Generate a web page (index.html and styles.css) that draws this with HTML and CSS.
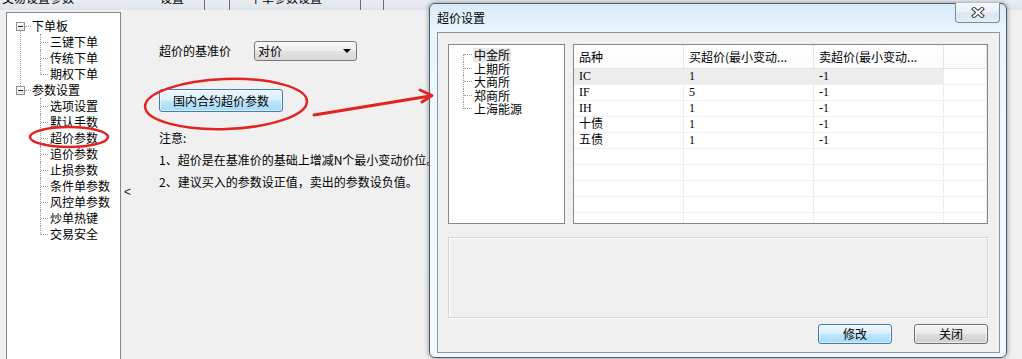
FILE: index.html
```html
<!DOCTYPE html>
<html lang="zh-CN">
<head>
<meta charset="utf-8">
<title>超价参数</title>
<link rel="stylesheet" href="styles.css">
</head>
<body>
<div class="app">
  <div class="tabstrip">
    <span class="tab tab-a">交易设置参数</span>
    <span class="tab tab-b">设置</span>
    <span class="tab-sep sep-a"></span>
    <span class="tab-sep sep-b"></span>
    <span class="tab tab-c">下单参数设置</span>
    <span class="tab-sep sep-c"></span>
    <span class="tab-sep sep-d"></span>
  </div>
  <div class="main">
    <ul class="nav-tree">
      <li class="tree-node">
        <div class="tree-row"><span class="tree-toggle"></span><span class="tree-label">下单板</span></div>
        <ul class="tree-children">
          <li class="tree-leaf">三键下单</li>
          <li class="tree-leaf">传统下单</li>
          <li class="tree-leaf">期权下单</li>
        </ul>
      </li>
      <li class="tree-node">
        <div class="tree-row"><span class="tree-toggle"></span><span class="tree-label">参数设置</span></div>
        <ul class="tree-children">
          <li class="tree-leaf">选项设置</li>
          <li class="tree-leaf">默认手数</li>
          <li class="tree-leaf">超价参数</li>
          <li class="tree-leaf">追价参数</li>
          <li class="tree-leaf">止损参数</li>
          <li class="tree-leaf">条件单参数</li>
          <li class="tree-leaf">风控单参数</li>
          <li class="tree-leaf">炒单热键</li>
          <li class="tree-leaf">交易安全</li>
        </ul>
      </li>
    </ul>
    <div class="collapse">&lt;</div>
    <div class="content">
      <div class="field-row">
        <span class="field-label">超价的基准价</span>
        <div class="select"><span>对价</span><span class="caret"></span></div>
      </div>
      <button class="btn btn-blue btn-domestic">国内合约超价参数</button>
      <div class="notes">
        <p>注意:</p>
        <p>1、超价是在基准价的基础上增减N个最小变动价位。</p>
        <p>2、建议买入的参数设正值，卖出的参数设负值。</p>
      </div>
    </div>
  </div>
</div>

<div class="dialog">
  <div class="dialog-titlebar">
    <span class="dialog-title">超价设置</span>
    <button class="dialog-close">
      <svg width="14" height="11" viewBox="0 0 14 11">
        <path d="M3 2 L11 9 M11 2 L3 9" stroke="#3a3a3a" stroke-width="4" stroke-linecap="square"/>
        <path d="M3 2 L11 9 M11 2 L3 9" stroke="#ffffff" stroke-width="2" stroke-linecap="square"/>
      </svg>
    </button>
  </div>
  <div class="dialog-client">
    <div class="panes">
      <ul class="exch-tree">
        <li class="exch-item"><span class="exch-label selected">中金所</span></li>
        <li class="exch-item"><span class="exch-label">上期所</span></li>
        <li class="exch-item"><span class="exch-label">大商所</span></li>
        <li class="exch-item"><span class="exch-label">郑商所</span></li>
        <li class="exch-item"><span class="exch-label">上海能源</span></li>
      </ul>
      <div class="grid-table">
        <div class="grid-head">
          <div class="hcell">品种</div>
          <div class="hcell">买超价(最小变动...</div>
          <div class="hcell">卖超价(最小变动...</div>
          <div class="hcell"></div>
        </div>
        <div class="grid-body">
          <div class="grow selected"><div class="cell">IC</div><div class="cell">1</div><div class="cell">-1</div><div class="cell"></div></div>
          <div class="grow"><div class="cell">IF</div><div class="cell">5</div><div class="cell">-1</div><div class="cell"></div></div>
          <div class="grow"><div class="cell">IH</div><div class="cell">1</div><div class="cell">-1</div><div class="cell"></div></div>
          <div class="grow"><div class="cell">十债</div><div class="cell">1</div><div class="cell">-1</div><div class="cell"></div></div>
          <div class="grow"><div class="cell">五债</div><div class="cell">1</div><div class="cell">-1</div><div class="cell"></div></div>
          <div class="grow"><div class="cell"></div><div class="cell"></div><div class="cell"></div><div class="cell"></div></div>
          <div class="grow"><div class="cell"></div><div class="cell"></div><div class="cell"></div><div class="cell"></div></div>
          <div class="grow"><div class="cell"></div><div class="cell"></div><div class="cell"></div><div class="cell"></div></div>
          <div class="grow"><div class="cell"></div><div class="cell"></div><div class="cell"></div><div class="cell"></div></div>
          <div class="grow"><div class="cell"></div><div class="cell"></div><div class="cell"></div><div class="cell"></div></div>
        </div>
      </div>
    </div>
    <div class="info-box"></div>
    <div class="dialog-actions">
      <button class="btn btn-blue btn-action">修改</button>
      <button class="btn btn-gray btn-action">关闭</button>
    </div>
  </div>
</div>

<svg class="annotations" width="1022" height="359" viewBox="0 0 1022 359">
  <ellipse cx="69" cy="137" rx="39" ry="10" fill="none" stroke="#e3231f" stroke-width="2.5"/>
  <ellipse cx="226" cy="104" rx="81" ry="25" fill="none" stroke="#e3231f" stroke-width="2.5" transform="rotate(-2 226 104)"/>
  <path d="M314 115 L430 96" fill="none" stroke="#e3231f" stroke-width="3" stroke-linecap="round"/>
  <path d="M420 90 L432 95.5 L422 102" fill="none" stroke="#e3231f" stroke-width="3" stroke-linecap="round" stroke-linejoin="round"/>
</svg>
</body>
</html>
```

FILE: styles.css
```css
* {
  box-sizing: border-box;
  margin: 0;
  padding: 0;
}

html,
body {
  width: 1022px;
  height: 359px;
  overflow: hidden;
}

body {
  position: relative;
  background: #f0f0f0;
  color: #000;
  font: 12px/16px "Noto Sans CJK SC", "Liberation Sans", sans-serif;
}

ul {
  list-style: none;
}

button {
  font: inherit;
  color: inherit;
}

/* ---------- top tab strip (cut off) ---------- */
.tabstrip {
  display: flex;
  height: 10px;
  overflow: hidden;
  background: linear-gradient(#e9edf2, #dfe5ec);
}

.tab {
  margin-top: -10px;
  line-height: 16px;
  white-space: nowrap;
}

.tab-a { margin-left: 2px; }
.tab-b { margin-left: 86px; }
.tab-c { margin-left: 20px; }

.tab-sep {
  width: 1px;
  height: 10px;
  background: #6d6d6d;
}

.sep-a { margin-left: 20px; }
.sep-b { margin-left: 24px; }
.sep-c { margin-left: 38px; }
.sep-d { margin-left: 22px; }

/* ---------- main window ---------- */
.main {
  display: flex;
  height: 349px;
  padding: 2px 0 0 6px;
}

.nav-tree {
  width: 115px;
  flex: none;
  background: #fff;
  border: 1px solid #828790;
  border-bottom: none;
  padding-top: 5px;
}

.tree-node {
  position: relative;
}

.tree-node::before {
  content: "";
  position: absolute;
  left: 13px;
  top: 13px;
  bottom: -4px;
  border-left: 1px dotted #a0a0a0;
}

.tree-node:last-child::before {
  display: none;
}

.tree-row {
  position: relative;
  height: 16px;
  padding-left: 25px;
  white-space: nowrap;
}

.tree-row::before {
  content: "";
  position: absolute;
  left: 18px;
  top: 8px;
  width: 6px;
  border-top: 1px dotted #a0a0a0;
}

.tree-toggle {
  position: absolute;
  left: 9px;
  top: 4px;
  width: 9px;
  height: 9px;
  border: 1px solid #919191;
  background: linear-gradient(#ffffff, #e4e4e4);
  z-index: 1;
}

.tree-toggle::after {
  content: "";
  position: absolute;
  left: 1px;
  top: 3px;
  width: 5px;
  height: 1px;
  background: #1e1e1e;
}

.tree-children {
  padding-left: 43px;
}

.tree-leaf {
  position: relative;
  height: 16px;
  white-space: nowrap;
}

.tree-leaf::before {
  content: "";
  position: absolute;
  left: -10px;
  top: 0;
  height: 16px;
  border-left: 1px dotted #a0a0a0;
}

.tree-leaf:last-child::before {
  height: 9px;
}

.tree-leaf::after {
  content: "";
  position: absolute;
  left: -9px;
  top: 8px;
  width: 7px;
  border-top: 1px dotted #a0a0a0;
}

.collapse {
  width: 38px;
  flex: none;
  padding: 172px 0 0 3px;
  font-family: "Liberation Sans", sans-serif;
  color: #222;
}

.content {
  flex: 1;
  padding-top: 29px;
  white-space: nowrap;
}

.field-row {
  display: flex;
  align-items: center;
  height: 20px;
}

.field-label {
  width: 95px;
}

.select {
  display: flex;
  align-items: center;
  justify-content: space-between;
  width: 103px;
  height: 20px;
  padding: 0 5px 0 3px;
  border: 1px solid #7a7a7a;
  border-radius: 3px;
  background: linear-gradient(#f7f7f7, #ececec 50%, #e2e2e2 51%, #d9d9d9);
}

.caret {
  width: 0;
  height: 0;
  border-left: 4px solid transparent;
  border-right: 4px solid transparent;
  border-top: 4px solid #000;
}

.btn {
  display: flex;
  align-items: center;
  justify-content: center;
  border-radius: 3px;
  cursor: default;
}

.btn-blue {
  border: 1px solid #3c7fb1;
  background: linear-gradient(#eaf6fd, #d9f0fc 48%, #bee6fd 52%, #a7d9f5);
  box-shadow: inset 0 0 0 1px rgba(255, 255, 255, 0.55);
}

.btn-gray {
  border: 1px solid #707070;
  background: linear-gradient(#f2f2f2, #ebebeb 48%, #dddddd 52%, #cfcfcf);
  box-shadow: inset 0 0 0 1px rgba(255, 255, 255, 0.6);
}

.btn-domestic {
  width: 124px;
  height: 23px;
  margin-top: 28px;
}

.notes {
  margin-top: 15px;
  line-height: 22px;
}

/* ---------- dialog ---------- */
.dialog {
  position: absolute;
  left: 429px;
  top: 3px;
  z-index: 5;
  display: flex;
  flex-direction: column;
  width: 578px;
  height: 355px;
  padding: 0 6px 4px 7px;
  border: 1px solid #545c64;
  border-radius: 6px;
  background: linear-gradient(#d9ecf9, #e8f5fd 28px, #eef8fe 120px, #f1f9fe);
  box-shadow: 0 0 5px rgba(0, 0, 0, 0.45);
}

.dialog-titlebar {
  position: relative;
  display: flex;
  align-items: center;
  height: 28px;
  flex: none;
}

.dialog-title {
  color: #000;
}

.dialog-close {
  position: absolute;
  top: -1px;
  right: 0;
  display: flex;
  align-items: center;
  justify-content: center;
  width: 45px;
  height: 20px;
  border: 1px solid #7d8b98;
  border-top: none;
  border-radius: 0 0 4px 4px;
  background: linear-gradient(#f6fafd, #e6eef5 50%, #dbe6ef 51%, #e4edf4);
}

.dialog-client {
  flex: 1;
  display: flex;
  flex-direction: column;
  padding: 11px 11px 8px 10px;
  border: 1px solid #8e9499;
  background: #f0f0f0;
}

.panes {
  display: flex;
  gap: 8px;
  height: 180px;
  flex: none;
}

.exch-tree {
  width: 117px;
  flex: none;
  padding: 3px 0 0 24px;
  border: 1px solid #828790;
  background: #fff;
}

.exch-item {
  position: relative;
  height: 13.5px;
  white-space: nowrap;
}

.exch-item::before {
  content: "";
  position: absolute;
  left: -10px;
  top: 0;
  height: 13.5px;
  border-left: 1px dotted #a0a0a0;
}

.exch-item:first-child::before {
  top: 6px;
  height: 7.5px;
}

.exch-item:last-child::before {
  height: 7px;
}

.exch-item::after {
  content: "";
  position: absolute;
  left: -9px;
  top: 6px;
  width: 8px;
  border-top: 1px dotted #a0a0a0;
}

.exch-label {
  display: inline-block;
  height: 13.5px;
  line-height: 13.5px;
  padding: 0 1px;
  vertical-align: top;
}

.exch-label.selected {
  background: #e8e8e8;
}

.grid-table {
  width: 415px;
  flex: none;
  display: flex;
  flex-direction: column;
  overflow: hidden;
  border: 1px solid #828790;
  background: #fff;
}

.grid-head,
.grow {
  display: grid;
  grid-template-columns: 110px 130px 130px 1fr;
  flex: none;
}

.grid-head {
  height: 24px;
  border-bottom: 1px solid #e2e4e7;
  background: linear-gradient(#ffffff, #f9fafb);
}

.hcell {
  padding: 4px 0 0 5px;
  border-right: 1px solid #e5e5e5;
  white-space: nowrap;
  overflow: hidden;
}

.grid-body {
  flex: 1;
  overflow: hidden;
}

.grow {
  height: 16px;
  border-bottom: 1px solid #f0f0f0;
}

.cell {
  padding-left: 5px;
  line-height: 15px;
  border-right: 1px solid #ececec;
  font-family: "Liberation Serif", "Noto Sans CJK SC", serif;
  white-space: nowrap;
}

.grow.selected .cell:not(:last-child) {
  background: #ededed;
}

.info-box {
  width: 540px;
  height: 81px;
  margin-top: 13px;
  flex: none;
  border: 1px solid #d5d5d5;
  box-shadow: inset 1px 1px 0 #ffffff, 1px 1px 0 #ffffff;
}

.dialog-actions {
  display: flex;
  justify-content: flex-end;
  gap: 22px;
  width: 540px;
  margin-top: 6px;
}

.btn-action {
  width: 74px;
  height: 20px;
}

/* ---------- hand-drawn annotations ---------- */
.annotations {
  position: absolute;
  left: 0;
  top: 0;
  z-index: 10;
  pointer-events: none;
}
```
